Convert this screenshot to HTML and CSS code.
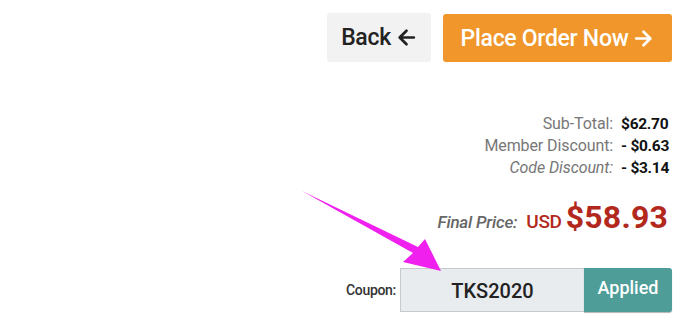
FILE: index.html
```html
<!DOCTYPE html>
<html>
<head>
<meta charset="utf-8">
<link rel="stylesheet" href="styles.css">
</head>
<body>
<div class="page">
  <div class="actions">
    <button class="btn btn-back">Back <svg class="ico" viewBox="0 0 20 20"><path d="M17 10H4M10 3.5L3.5 10 10 16.5" fill="none" stroke="currentColor" stroke-width="2.6" stroke-linecap="round" stroke-linejoin="round"/></svg></button>
    <button class="btn btn-order">Place Order Now <svg class="ico" viewBox="0 0 20 20"><path d="M3 10h13M10 3.5l6.5 6.5-6.5 6.5" fill="none" stroke="currentColor" stroke-width="2.6" stroke-linecap="round" stroke-linejoin="round"/></svg></button>
  </div>
  <div class="totals">
    <span class="lbl">Sub-Total:</span><span class="val">$62.70</span>
    <span class="lbl">Member Discount:</span><span class="val">- $0.63</span>
    <span class="lbl it">Code Discount:</span><span class="val">- $3.14</span>
  </div>
  <div class="final">
    <span class="final-lbl">Final Price:</span>
    <span class="cur">USD</span>
    <span class="amount">$58.93</span>
  </div>
  <div class="coupon">
    <span class="coupon-lbl">Coupon:</span>
    <div class="coupon-field">
      <span class="coupon-input">TKS2020</span>
      <span class="coupon-btn">Applied</span>
    </div>
  </div>
  <svg class="pointer" viewBox="0 0 700 334" width="700" height="334">
    <path d="M302 191 L413 253 L403 262 L441 271 L425 239 L418 247 Z" fill="#f020ee"/>
  </svg>
</div>
</body>
</html>
```
FILE: styles.css
```css
html, body { margin: 0; padding: 0; background: #fff; }
body { font-family: Roboto, "Liberation Sans", sans-serif; }
.page {
  position: relative;
  width: 700px;
  height: 334px;
  box-sizing: border-box;
  padding: 13px 28px 0 0;
  display: flex;
  flex-direction: column;
  align-items: flex-end;
}
.actions { display: flex; gap: 12px; align-items: flex-start; }
.btn {
  border: 0;
  border-radius: 3px;
  font-family: Roboto, "Liberation Sans", sans-serif;
  font-size: 23px;
  font-weight: 500;
  display: flex;
  align-items: center;
  justify-content: center;
  gap: 5px;
  padding: 0;
  letter-spacing: -0.3px;
}
.ico { width: 21px; height: 21px; }
.btn-back { width: 104px; height: 49px; background: #f2f2f2; color: #222; }
.btn-order { width: 229px; height: 48px; background: #f0962a; color: #fff; margin-top: 1px; }
.totals {
  margin-top: 51px;
  display: grid;
  grid-template-columns: auto auto;
  column-gap: 8px;
  font-size: 16px;
  line-height: 22px;
  margin-right: 3px;
}
.lbl { color: #777; text-align: right; letter-spacing: -0.1px; }
.lbl.it { font-style: italic; }
.val { color: #111; font-weight: 700; text-align: left; font-size: 15.5px; letter-spacing: -0.3px; }
.final {
  margin-top: 19px;
  display: flex;
  align-items: baseline;
  height: 39px;
  margin-right: 4px;
}
.final-lbl { color: #666; font-style: italic; font-size: 17px; margin-right: 9px; font-weight: 500; letter-spacing: -0.2px; }
.cur { color: #b3281c; font-size: 19px; font-weight: 500; margin-right: 4px; letter-spacing: -0.3px; }
.amount { color: #b3281c; font-size: 32px; font-weight: 700; letter-spacing: 0.2px; }
.coupon {
  margin-top: 31px;
  display: flex;
  align-items: center;
}
.coupon-lbl { font-size: 14px; color: #333; margin-right: 4px; font-weight: 500; letter-spacing: -0.3px; }
.coupon-field { display: flex; height: 44px; }
.coupon-input {
  width: 184px;
  box-sizing: border-box;
  background: #e9ecef;
  border: 1px solid #c9c9c9;
  border-right: 0;
  font-size: 20px;
  font-weight: 500;
  color: #222;
  display: flex;
  align-items: center;
  justify-content: center;
  padding-top: 2px;
}
.coupon-btn {
  width: 88px;
  background: #4e9d98;
  color: #fff;
  font-size: 18px;
  font-weight: 500;
  border-radius: 0 3px 3px 0;
  display: flex;
  align-items: center;
  justify-content: center;
  padding-bottom: 6px;
  box-sizing: border-box;
  box-shadow: 0 1px 1px rgba(0,0,0,0.3);
}
.pointer { position: absolute; left: 0; top: 0; pointer-events: none; }
```
